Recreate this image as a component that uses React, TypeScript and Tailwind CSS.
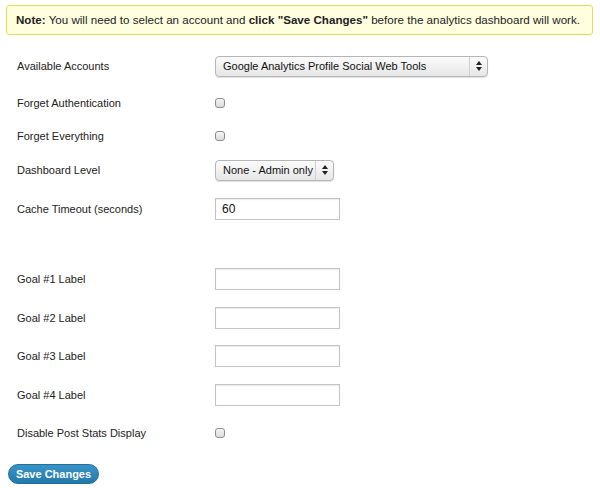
import React from 'react';

const font = { fontFamily: '"Liberation Sans", Arial, sans-serif' };

const SelectBox: React.FC<{ value: string; width: string }> = ({ value, width }) => (
  <div
    className={`flex h-[21px] ${width} items-stretch rounded-[4px] border border-[#b5b5b5] bg-gradient-to-b from-[#fbfbfb] to-[#e6e6e6] shadow-[0_1px_1px_rgba(0,0,0,0.12)]`}
  >
    <span className="flex flex-1 items-center whitespace-nowrap pl-[7px] text-[11px] text-[#111]">{value}</span>
    <span className="flex w-[18px] flex-col items-center justify-center border-l border-[#d0d0d0]">
      <svg width="6" height="10" viewBox="0 0 6 10">
        <path d="M3 0 L6 4 L0 4 Z" fill="#222" />
        <path d="M3 10 L6 6 L0 6 Z" fill="#222" />
      </svg>
    </span>
  </div>
);

const TextBox: React.FC<{ value?: string }> = ({ value }) => (
  <div className="flex h-[22px] w-[125px] items-center border border-[#c4c4c4] bg-white pl-[6px] text-[12px] text-[#111] shadow-[inset_0_1px_1px_rgba(0,0,0,0.08)]">
    {value}
  </div>
);

const Check: React.FC = () => (
  <div className="h-[10px] w-[10px] rounded-[3px] border border-[#8f8f8f] bg-gradient-to-b from-[#f4f4f4] to-[#dcdcdc]" />
);

const Row: React.FC<{ label: string; mt: string; children: React.ReactNode }> = ({ label, mt, children }) => (
  <div className={`flex h-[22px] items-center ${mt}`}>
    <div className="w-[198px] text-[11px] text-[#222]">{label}</div>
    {children}
  </div>
);

export default function App() {
  return (
    <div className="h-[488px] w-[600px] bg-white" style={font}>
      <div className="pl-[6px] pr-[7px] pt-[5px]">
        <div className="flex h-[30px] items-center rounded-[3px] border border-[#e6db55] bg-[#ffffe0] pl-[9px] text-[11.6px] text-[#222]">
          <span>
            <b>Note:</b> You will need to select an account and <b>click "Save Changes"</b> before the analytics
            dashboard will work.
          </span>
        </div>
      </div>

      <div className="pl-[17px]">
        <Row label="Available Accounts" mt="mt-[20px]">
          <SelectBox value="Google Analytics Profile Social Web Tools" width="w-[273px]" />
        </Row>
        <Row label="Forget Authentication" mt="mt-[15px]">
          <Check />
        </Row>
        <Row label="Forget Everything" mt="mt-[11px]">
          <Check />
        </Row>
        <Row label="Dashboard Level" mt="mt-[12px]">
          <SelectBox value="None - Admin only" width="w-[119px]" />
        </Row>
        <Row label="Cache Timeout (seconds)" mt="mt-[17px]">
          <TextBox value="60" />
        </Row>
        <Row label="Goal #1 Label" mt="mt-[48px]">
          <TextBox />
        </Row>
        <Row label="Goal #2 Label" mt="mt-[17px]">
          <TextBox />
        </Row>
        <Row label="Goal #3 Label" mt="mt-[16px]">
          <TextBox />
        </Row>
        <Row label="Goal #4 Label" mt="mt-[17px]">
          <TextBox />
        </Row>
        <Row label="Disable Post Stats Display" mt="mt-[16px]">
          <Check />
        </Row>
      </div>

      <div className="mt-[20px] pl-[8px]">
        <button className="flex h-[20px] w-[91px] items-center justify-center rounded-full border border-[#1f6f9c] bg-gradient-to-b from-[#3a93c6] to-[#2179ac] text-[11px] font-bold text-white">
          Save Changes
        </button>
      </div>
    </div>
  );
}
